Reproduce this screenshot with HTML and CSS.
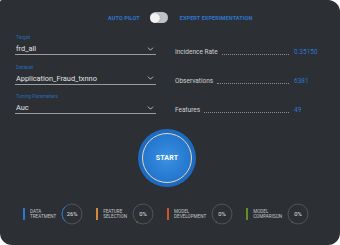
FILE: index.html
```html
<!DOCTYPE html>
<html>
<head>
<meta charset="utf-8">
<link rel="stylesheet" href="styles.css">
</head>
<body>
<div class="card">
  <div class="mode-row">
    <span class="mode-label">AUTO PILOT</span>
    <span class="toggle"><span class="knob"></span></span>
    <span class="mode-label">EXPERT EXPERIMENTATION</span>
  </div>

  <div class="main">
    <div class="fields">
      <div class="field">
        <div class="field-label">Target</div>
        <div class="field-value"><span>frd_all</span><svg class="chev" viewBox="0 0 8 5" width="7" height="4"><path d="M0.8 0.8 L4 4 L7.2 0.8" fill="none" stroke="#d8d8d8" stroke-width="1"/></svg></div>
      </div>
      <div class="field">
        <div class="field-label">Dataset</div>
        <div class="field-value"><span>Application_Fraud_txnno</span><svg class="chev" viewBox="0 0 8 5" width="7" height="4"><path d="M0.8 0.8 L4 4 L7.2 0.8" fill="none" stroke="#d8d8d8" stroke-width="1"/></svg></div>
      </div>
      <div class="field">
        <div class="field-label">Tuning Parameters</div>
        <div class="field-value"><span>Auc</span><svg class="chev" viewBox="0 0 8 5" width="7" height="4"><path d="M0.8 0.8 L4 4 L7.2 0.8" fill="none" stroke="#d8d8d8" stroke-width="1"/></svg></div>
      </div>
    </div>
    <div class="stats">
      <div class="stat"><span class="stat-name">Incidence Rate</span><span class="dots"></span><span class="stat-val">0.35150</span></div>
      <div class="stat"><span class="stat-name">Observations</span><span class="dots"></span><span class="stat-val">6381</span></div>
      <div class="stat"><span class="stat-name">Features</span><span class="dots"></span><span class="stat-val">49</span></div>
    </div>
  </div>

  <div class="start-wrap">
    <button class="start"><span class="ring"><span class="start-text">START</span></span></button>
  </div>

  <div class="steps">
    <div class="step">
      <span class="bar blue"></span>
      <span class="step-label">DATA<br>TREATMENT</span>
      <span class="gauge">
        <svg viewBox="0 0 22 22" width="22" height="22"><circle cx="11" cy="11" r="10" fill="none" stroke="#6b6e73" stroke-width="0.6"/><circle class="arc" cx="11" cy="11" r="10" fill="none" stroke="#2a78d0" stroke-width="0.9" stroke-linecap="round" stroke-dasharray="16.3 100" transform="rotate(135 11 11)"/></svg>
        <span class="pct">26%</span>
      </span>
    </div>
    <div class="step">
      <span class="bar orange"></span>
      <span class="step-label">FEATURE<br>SELECTION</span>
      <span class="gauge">
        <svg viewBox="0 0 22 22" width="22" height="22"><circle cx="11" cy="11" r="10" fill="none" stroke="#6b6e73" stroke-width="0.6"/><circle cx="11" cy="11" r="10" fill="none" stroke="#d48a3c" stroke-width="1" stroke-linecap="round" stroke-dasharray="0.3 100" transform="rotate(125 11 11)"/></svg>
        <span class="pct">0%</span>
      </span>
    </div>
    <div class="step">
      <span class="bar red"></span>
      <span class="step-label">MODEL<br>DEVELOPMENT</span>
      <span class="gauge">
        <svg viewBox="0 0 22 22" width="22" height="22"><circle cx="11" cy="11" r="10" fill="none" stroke="#6b6e73" stroke-width="0.6"/><circle cx="11" cy="11" r="10" fill="none" stroke="#d0522c" stroke-width="1" stroke-linecap="round" stroke-dasharray="0.3 100" transform="rotate(125 11 11)"/></svg>
        <span class="pct">0%</span>
      </span>
    </div>
    <div class="step">
      <span class="bar green"></span>
      <span class="step-label">MODEL<br>COMPARISON</span>
      <span class="gauge">
        <svg viewBox="0 0 22 22" width="22" height="22"><circle cx="11" cy="11" r="10" fill="none" stroke="#6b6e73" stroke-width="0.6"/><circle cx="11" cy="11" r="10" fill="none" stroke="#6a9a2c" stroke-width="1" stroke-linecap="round" stroke-dasharray="0.3 100" transform="rotate(125 11 11)"/></svg>
        <span class="pct">0%</span>
      </span>
    </div>
  </div>
</div>
</body>
</html>
```
FILE: styles.css
```css
* { box-sizing: border-box; }
html, body { margin: 0; padding: 0; background: #ffffff; }
body { font-family: Roboto, "Liberation Sans", sans-serif; }

.card {
  width: 340px;
  height: 245px;
  background: #2c2f34;
  border-radius: 2px 12px 12px 12px;
  overflow: hidden;
  position: relative;
}

.mode-row {
  display: flex;
  align-items: center;
  padding: 12px 0 0 108px;
  height: 23px;
}
.mode-label {
  font-size: 5.5px;
  font-weight: 700;
  color: #2d78cf;
  letter-spacing: 0.1px;
}
.toggle {
  width: 18px;
  height: 11px;
  border-radius: 6px;
  background: #bfc1c4;
  margin: 0 12px 0 10px;
  display: flex;
  align-items: center;
  padding-left: 0.5px;
}
.knob {
  width: 10px;
  height: 10px;
  border-radius: 50%;
  background: #f2f2f2;
  box-shadow: 0 0 1px rgba(0,0,0,0.4);
}

.main {
  display: flex;
  padding: 10px 0 0 15px;
}
.fields {
  width: 141px;
  display: flex;
  flex-direction: column;
  gap: 7.5px;
}
.field-label {
  font-size: 5px;
  color: #2a6ab4;
  line-height: 8px;
  padding-left: 1px;
}
.field-value {
  display: flex;
  align-items: center;
  justify-content: space-between;
  margin-top: 2px;
  height: 12px;
  border-bottom: 1px solid #9a9ca0;
  font-size: 7.4px;
  color: #e4e4e4;
  padding: 0 2px 0 1px;
}
.chev { display: block; }

.stats {
  margin-left: 18px;
  width: 145px;
  display: flex;
  flex-direction: column;
  gap: 19.2px;
  padding-top: 14px;
}
.stat {
  display: flex;
  align-items: center;
  height: 10px;
  font-size: 6.5px;
}
.stat-name { color: #cfd0d2; padding-left: 1px; }
.dots {
  flex: 1;
  align-self: flex-end;
  margin: 0 5px 2px 4px;
  border-bottom: 1px dotted #8b8d91;
}
.stat-val {
  color: #2d78cf;
  width: 25px;
}

.start-wrap {
  padding: 14px 0 0 138px;
}
.start {
  width: 58px;
  height: 58px;
  border-radius: 50%;
  border: none;
  padding: 0;
  background: #1d6ac2;
  display: flex;
  align-items: center;
  justify-content: center;
  cursor: pointer;
}
.ring {
  width: 50px;
  height: 50px;
  border-radius: 50%;
  border: 1px solid #efd9ad;
  background: radial-gradient(circle at 50% 50%, #3d92e2 0%, #2b7fd5 45%, #1c6dc6 100%);
  display: flex;
  align-items: center;
  justify-content: center;
}
.start-text {
  font-family: Roboto, "Liberation Sans", sans-serif;
  font-weight: 700;
  font-size: 7px;
  color: #ffffff;
  letter-spacing: 0.2px;
}

.steps {
  display: flex;
  align-items: center;
  gap: 13px;
  padding: 16px 0 0 23px;
}
.step {
  display: flex;
  align-items: center;
}
.bar {
  width: 2px;
  height: 12px;
  margin-right: 5px;
}
.bar.blue { background: #2a78d0; }
.bar.orange { background: #d48a3c; }
.bar.red { background: #c9542e; }
.bar.green { background: #5e8f28; }
.step-label {
  font-size: 4.6px;
  line-height: 5px;
  color: #c4c5c8;
  margin-right: 5px;
}
.gauge {
  position: relative;
  width: 22px;
  height: 22px;
  display: flex;
  align-items: center;
  justify-content: center;
}
.gauge svg { position: absolute; left: 0; top: 0; }
.pct {
  position: relative;
  font-size: 5.8px;
  color: #e2e2e2;
}
```
